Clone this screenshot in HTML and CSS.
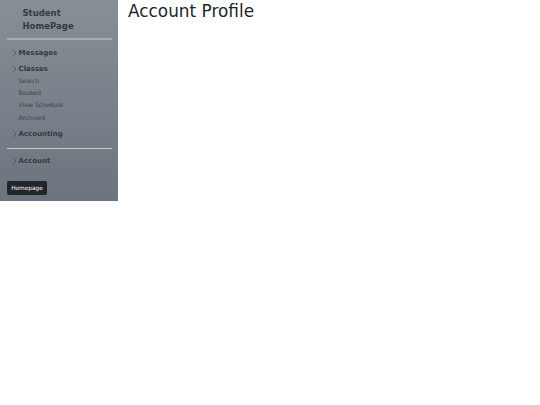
FILE: index.html
```html
<!DOCTYPE html>
<html lang="en">
<head>
<meta charset="utf-8">
<title>Account Profile</title>
<link rel="stylesheet" href="styles.css">
</head>
<body>
<div class="layout">
  <aside class="sidebar">
    <div class="brand">Student<br>HomePage</div>
    <hr class="rule rule-top">
    <nav class="nav">
      <div class="head"><svg class="chev" viewBox="0 0 5 8"><path d="M1 .7 4 4 1 7.3"/></svg>Messages</div>
      <div class="head"><svg class="chev" viewBox="0 0 5 8"><path d="M1 .7 4 4 1 7.3"/></svg>Classes</div>
      <div class="subs">
        <a class="sub">Search</a>
        <a class="sub">Booked</a>
        <a class="sub">View Schedule</a>
        <a class="sub">Archived</a>
      </div>
      <div class="head"><svg class="chev" viewBox="0 0 5 8"><path d="M1 .7 4 4 1 7.3"/></svg>Accounting</div>
    </nav>
    <hr class="rule rule-mid">
    <div class="head head-account"><svg class="chev" viewBox="0 0 5 8"><path d="M1 .7 4 4 1 7.3"/></svg>Account</div>
    <button class="home">Homepage</button>
  </aside>
  <main class="main">
    <h1 class="title">Account Profile</h1>
  </main>
</div>
</body>
</html>
```
FILE: styles.css
```css
html, body { margin: 0; padding: 0; background: #fff; }
body { font-family: "DejaVu Sans", sans-serif; color: #212529; }
.layout { display: flex; align-items: flex-start; }
.sidebar {
  width: 118px;
  height: 201px;
  box-sizing: border-box;
  padding: 7px 6px 0 7px;
  background: linear-gradient(180deg, #868e96 0%, #6c757d 100%);
  flex: none;
}
.brand {
  font-size: 8.5px;
  font-weight: 700;
  line-height: 12.5px;
  padding-left: 15.5px;
  color: #343a40;
}
.rule { border: 0; height: 1px; margin: 0; background: #a5abb1; }
.rule-top { margin-top: 6px; height: 1.5px; }
.rule-mid { margin-top: 5.5px; background: #c6cace; }
.nav { margin-top: 5px; }
.head {
  display: flex;
  align-items: center;
  height: 16px;
  font-size: 7px;
  font-weight: 700;
  color: #343a40;
}
.head-account { margin-top: 4px; }
.chev { width: 5px; height: 8px; margin: 0 1.5px 0 5px; fill: none; stroke: #4a5056; stroke-width: .8; }
.subs { margin: -1.5px 0 2.5px; }
.sub {
  display: block;
  height: 12.2px;
  line-height: 12.2px;
  font-size: 6.1px;
  padding-left: 11.5px;
  color: #3d444b;
}
.home {
  display: block;
  margin-top: 12px;
  width: 40px;
  height: 14px;
  padding: 0;
  border: 0;
  border-radius: 2px;
  background: #212529;
  color: #f8f9fa;
  font-family: inherit;
  font-size: 5.8px;
}
.main { padding: 1px 0 0 10px; }
.title { margin: 0; font-size: 16.9px; font-weight: 400; line-height: 21px; color: #212529; }
```
